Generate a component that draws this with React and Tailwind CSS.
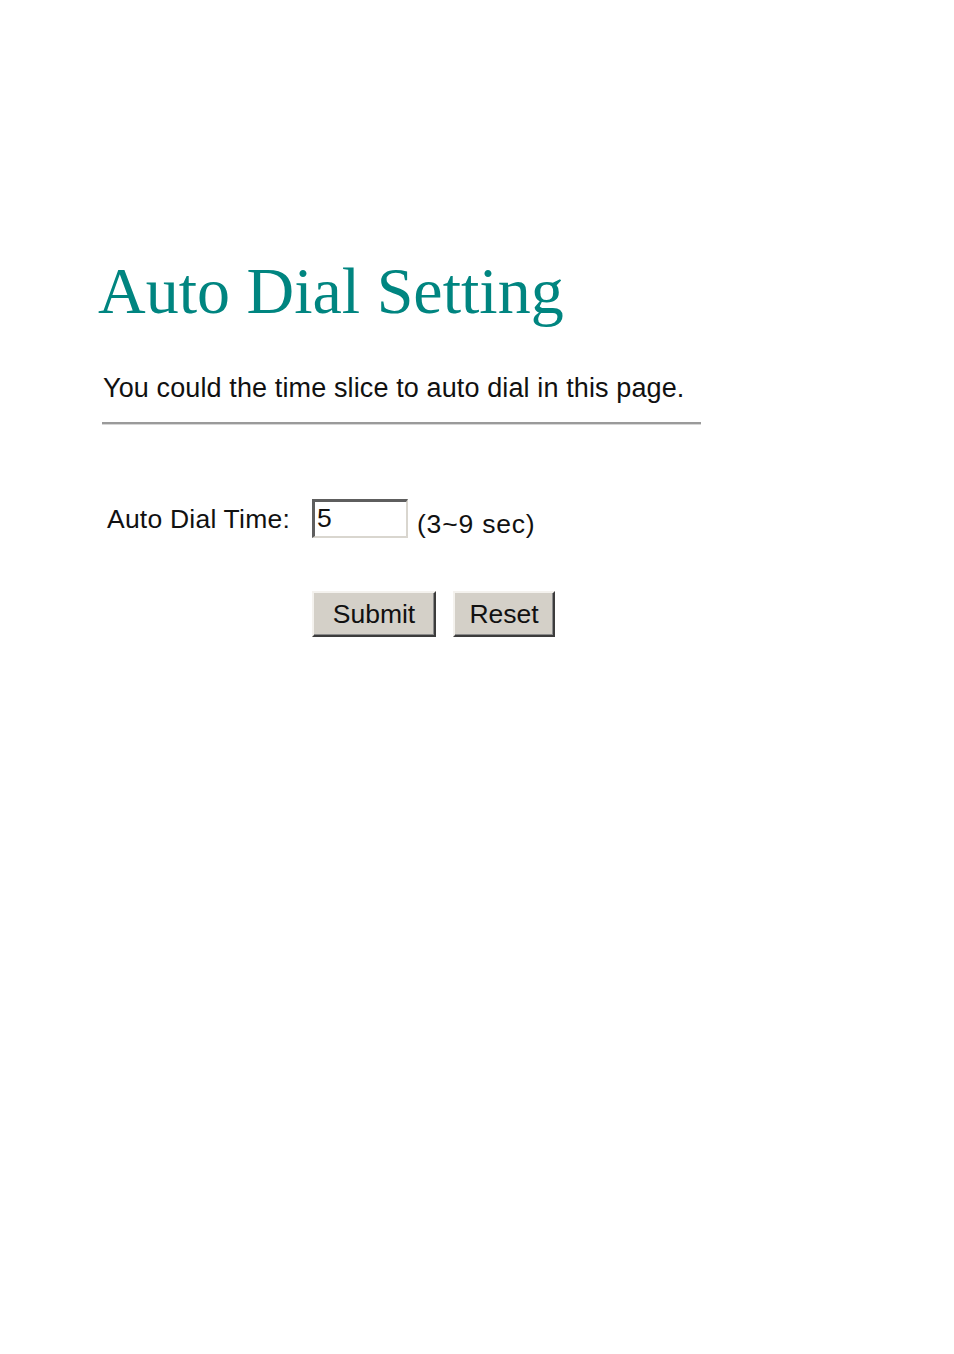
export default function App() {
  return (
    <div className="min-h-[1354px] w-[954px] bg-white pl-[98px] pt-[258px] text-[#111]">
      <h1
        className="m-0 text-[66px] font-normal leading-[66px] text-[#008580] whitespace-nowrap"
        style={{ fontFamily: '"Liberation Serif", "Times New Roman", serif' }}
      >
        Auto Dial Setting
      </h1>
      <p
        className="mt-[51px] ml-[5px] text-[27px] leading-[27px] tracking-[0.12px] whitespace-nowrap"
        style={{ fontFamily: '"Liberation Sans", Arial, sans-serif' }}
      >
        You could the time slice to auto dial in this page.
      </p>
      <div className="mt-[20px] ml-[4px] w-[599px] border-t-2 border-b border-t-[#9a9a9a] border-b-[#d6d6d6]" />
      <form
        className="mt-[74px]"
        style={{ fontFamily: '"Liberation Sans", Arial, sans-serif' }}
        onSubmit={(e) => e.preventDefault()}
      >
        <div className="flex items-start pl-[9px]">
          <label className="mt-[7px] w-[205px] text-[26.5px] leading-[27px] tracking-[0.22px] whitespace-nowrap">
            Auto Dial Time:
          </label>
          <input
            type="text"
            defaultValue="5"
            className="box-border h-[39px] w-[96px] border-t-[3px] border-l-[3px] border-r-2 border-b-2 border-t-[#5e5e5e] border-l-[#5e5e5e] border-r-[#d9d6cf] border-b-[#d9d6cf] bg-white pl-[2px] text-[26.5px] text-[#111] outline-none"
            style={{ fontFamily: '"Liberation Sans", Arial, sans-serif' }}
          />
          <span className="ml-[9px] mt-[12px] text-[26.5px] leading-[27px] tracking-[0.8px] whitespace-nowrap">
            (3~9 sec)
          </span>
        </div>
        <div className="mt-[53px] flex pl-[214px] gap-[17px]">
          <button
            type="submit"
            className="box-border flex h-[46px] w-[124px] items-center justify-center border-t-2 border-l-2 border-r-2 border-b-2 border-t-[#f4f2ee] border-l-[#f4f2ee] border-r-[#3c3c3c] border-b-[#3c3c3c] bg-[#d4d0c8] text-[26.5px] leading-none text-[#111] shadow-[inset_-1px_-1px_0_#8a8a8a]"
            style={{ fontFamily: '"Liberation Sans", Arial, sans-serif' }}
          >
            Submit
          </button>
          <button
            type="reset"
            className="box-border flex h-[46px] w-[102px] items-center justify-center border-t-2 border-l-2 border-r-2 border-b-2 border-t-[#f4f2ee] border-l-[#f4f2ee] border-r-[#3c3c3c] border-b-[#3c3c3c] bg-[#d4d0c8] text-[26.5px] leading-none text-[#111] shadow-[inset_-1px_-1px_0_#8a8a8a]"
            style={{ fontFamily: '"Liberation Sans", Arial, sans-serif' }}
          >
            Reset
          </button>
        </div>
      </form>
    </div>
  );
}
